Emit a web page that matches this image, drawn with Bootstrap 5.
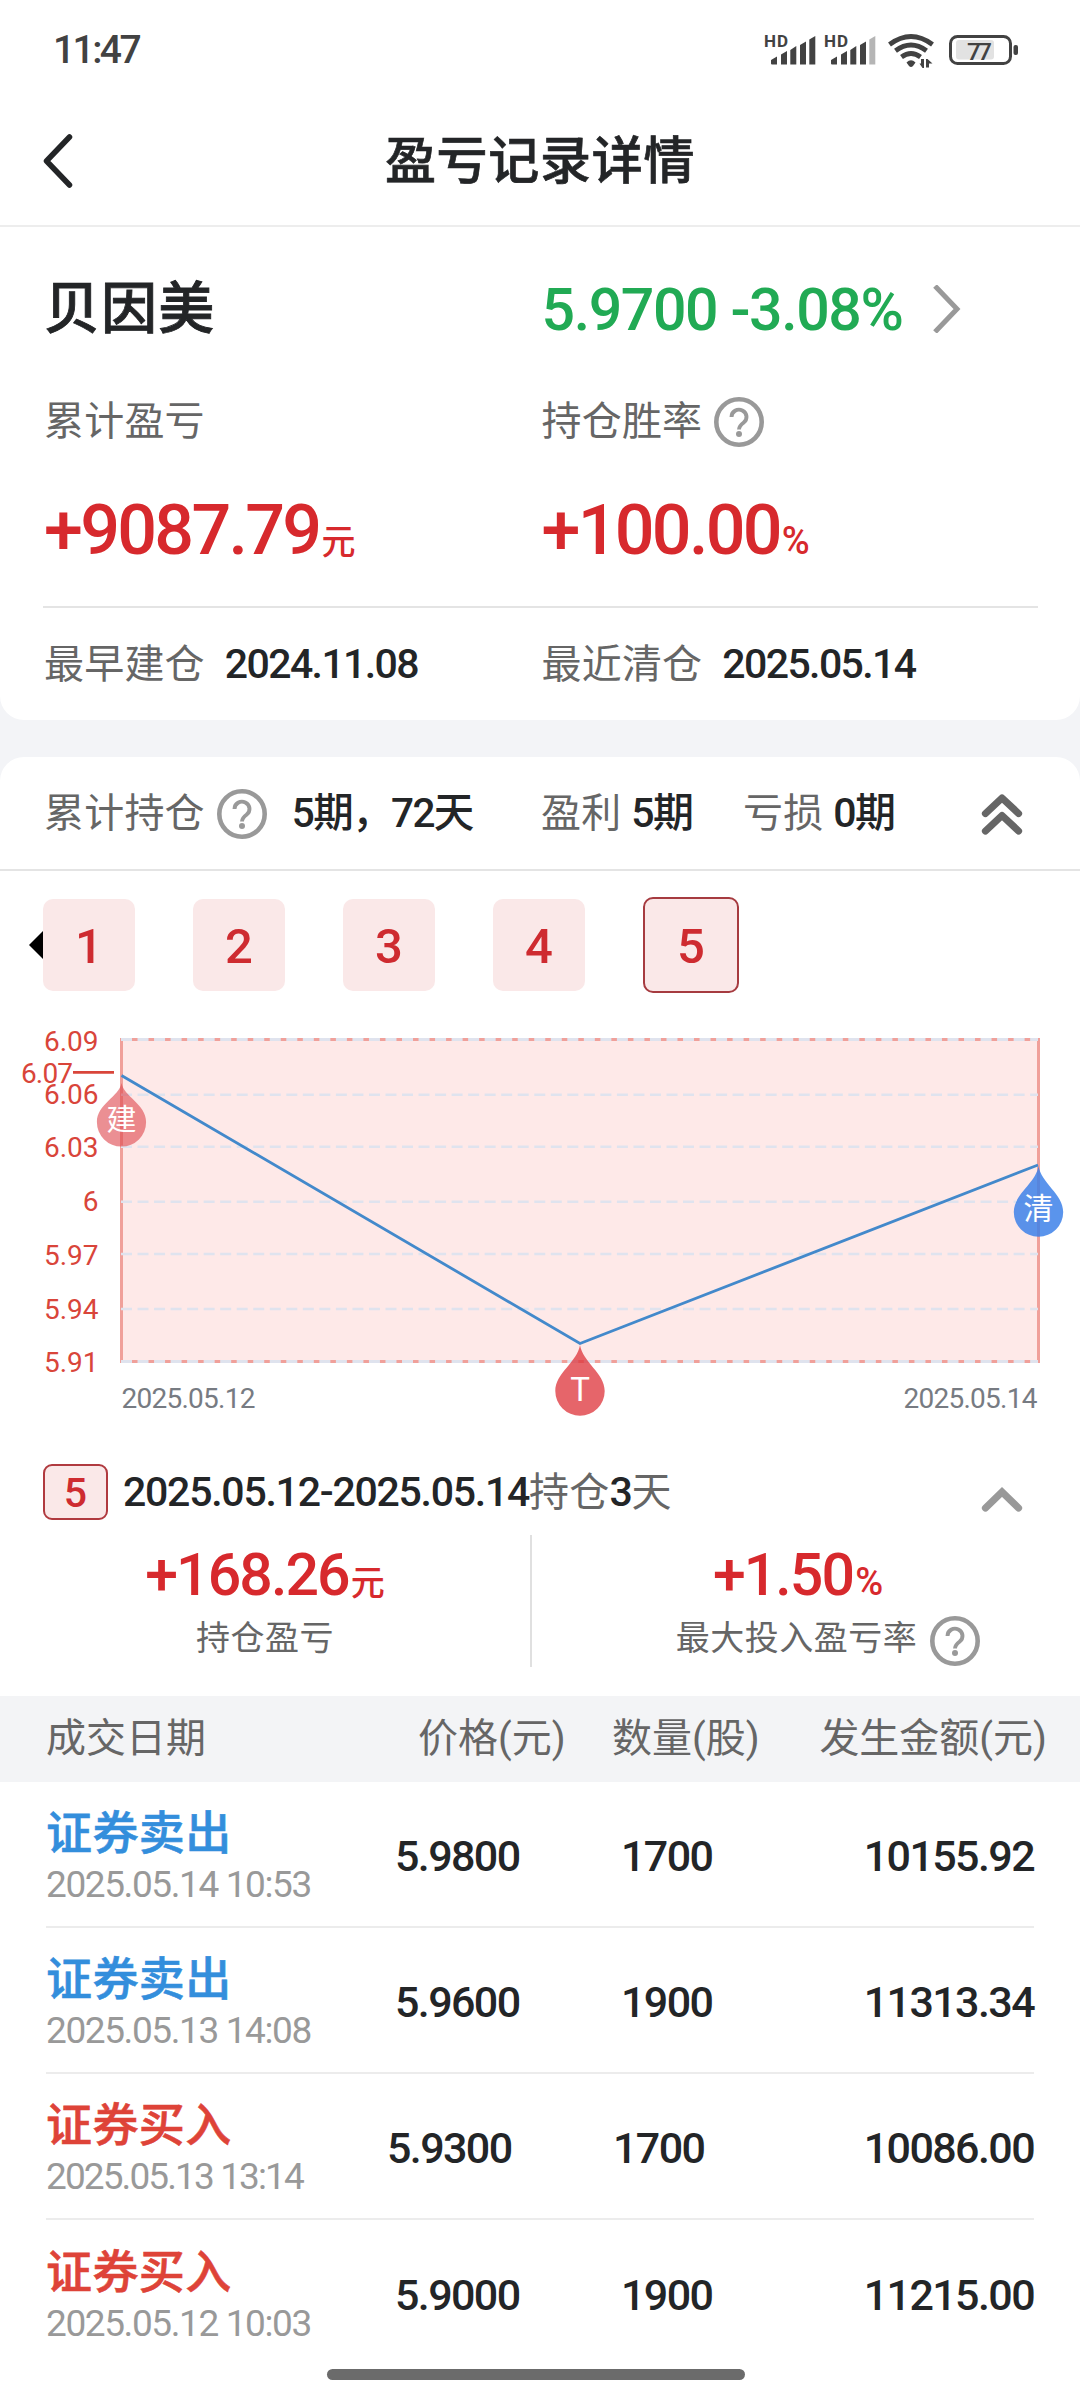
<!DOCTYPE html>
<html lang="zh-CN">
<head>
<meta charset="utf-8">
<meta name="viewport" content="width=device-width, initial-scale=1">
<title>盈亏记录详情</title>
<link href="https://cdn.jsdelivr.net/npm/bootstrap@5.3.0/dist/css/bootstrap.min.css" rel="stylesheet">
<style>
  body { font-family: Roboto, "Noto Sans CJK SC", sans-serif; background: #f3f4f7; color: #232527; width: 1080px; font-size: 40px; line-height: 1; }
  .screen { height: 2400px; overflow: hidden; }
  .screen svg { display: block; flex: none; }
  .line { white-space: nowrap; line-height: 1; }
  .gray { color: #666; letter-spacing: .2px; }
  .profit { color: #d7292d; }
  .fall { color: #21aa54; }
  .num { font-weight: 500; letter-spacing: -1.6px; font-size: 41px; }
  .statusbar { height: 100px; padding: 0 58px 0 53px; color: #424242; }
  .clock { font-size: 39px; letter-spacing: -2.6px; font-weight: 500; }
  .topbar { height: 127px; border-bottom: 2px solid #ededed; padding: 0 43px 2px; }
  .page-title { font-size: 51px; font-weight: 500; letter-spacing: .7px; -webkit-text-stroke: .7px currentColor; }
  .side { width: 80px; }
  .panel-a { border-radius: 0 0 24px 24px; height: 493px; padding: 0 42px 0 43px; }
  .panel-b { border-radius: 24px 24px 0 0; margin-top: 37px; height: 1643px; }
  .half { width: 498px; padding-left: 1px; }
  .stock { font-size: 56px; font-weight: 500; letter-spacing: 1.1px; -webkit-text-stroke: .8px currentColor; }
  .quote { font-size: 59px; font-weight: 500; letter-spacing: -1.4px; }
  .go { margin-left: 29px; }
  .big { font-size: 70px; font-weight: 500; letter-spacing: -2.7px; }
  .unit { font-size: 34px; letter-spacing: 0; font-weight: 500; margin-left: 2px; }
  .pct { font-size: 38px; letter-spacing: 0; font-weight: 500; margin-left: 2px; }
  .h-name { height: 161px; padding-top: 3px; } .h-label { height: 66px; padding-top: 2px; } .h-big { height: 152px; }
  .h-dates { height: 112px; border-top: 2px solid #e4e4e4; padding-top: 3px; }
  .gap-date { margin-left: 20px; }
  .help-a { margin-left: 12px; } .help-b { margin: 0 25px 0 12px; } .help-c { margin: 6px 0 0 13px; }
  .summary { height: 114px; border-bottom: 2px solid #e4e4e4; padding: 1px 57px 0 44px; }
  .sum-hold { width: 497px; } .sum-win { width: 202px; }
  .sum-hold .num { font-size: 40.5px; }
  .periods { height: 148px; padding: 0 43px 0 28px; }
  .arrow { border: 14px solid transparent; border-left: 0; border-right-color: #000; width: 15px; height: 28px; }
  .period { width: 92px; height: 92px; border-radius: 10px; background: #fae8e8; color: #ce2b30; font-size: 49px; font-weight: 500; margin-right: 58px; padding-top: 3px; }
  .period.current { width: 96px; height: 96px; border: 2px solid #a63b40; }
  .tag { width: 65px; height: 56px; border: 2px solid #b03a3f; border-radius: 9px; background: #fae8e8; color: #ce2b30; font-size: 41px; font-weight: 500; padding-top: 3px; }
  .detail { height: 88px; padding: 2px 57px 0 43px; }
  .span-text { margin-left: 15px; }
  .span-text .num { letter-spacing: -1.25px; }
  .fold { margin-top: 16px; }
  .result { height: 161px; }
  .result-l { width: 532px; height: 132px; border-right: 2px solid #e0e0e0; }
  .result-r { width: 548px; height: 132px; }
  .mid { font-size: 59px; font-weight: 500; letter-spacing: -1.9px; height: 78px; }
  .result-r .mid { padding-right: 16px; }
  .sub { font-size: 34px; letter-spacing: .5px; height: 50px; }
  .result-r .sub { padding-left: 44px; }
  .thead-row { height: 86px; background: #f3f4f6; padding: 0 33px 0 46px; letter-spacing: 0; }
  .h1st { width: 372px; } .h2nd { width: 194px; }
  .deal { height: 146px; margin: 0 46px; border-bottom: 2px solid #ececec; padding-top: 4px; }
  .deal:last-child { border: 0; }
  .c1 { width: 349px; }
  .narrow .c1 { width: 341px; }
  .narrow .stamp { letter-spacing: -1.9px; }
  .c2 { width: 226px; }
  .side-name { font-size: 46px; letter-spacing: .4px; font-weight: 500; margin-bottom: 10px; -webkit-text-stroke: .6px currentColor; }
  .sell { color: #338edc; } .buy { color: #de4338; }
  .stamp { font-size: 37px; letter-spacing: -1.4px; color: #999; }
  .val { font-size: 43px; font-weight: 500; letter-spacing: -1.6px; }
  .homebar { left: 327px; top: 2369px; width: 418px; height: 11px; border-radius: 6px; background: #6b6b6b; }
</style>
</head>
<body>
<svg width="0" height="0" class="position-absolute">
  <symbol id="help" viewBox="0 0 50 50">
    <circle cx="25" cy="25" r="22.7" fill="none" stroke="#999" stroke-width="4.6"/>
    <path d="M17.500 20a7.500 7.300 0 1 1 12 5.800c-2.800 2.100-4.500 3.400-4.500 6.700" fill="none" stroke="#999" stroke-width="3.900"/>
    <circle cx="25" cy="37" r="3" fill="#999"/>
  </symbol>
</svg>
<div class="screen position-relative">
  <div class="bg-white">
    <div class="statusbar d-flex align-items-center justify-content-between">
      <div class="line clock">11:47</div>
      <svg width="260" height="40" viewBox="762 30 260 40" fill="#424242">
        <g font-family="Roboto, sans-serif" font-weight="700" font-size="17">
          <text x="764" y="46.500" textLength="24">HD</text><text x="824" y="46.500" textLength="24">HD</text>
        </g>
        <path d="M771 60l6-3.500v8h-5q-1 0-1-1zM781 54.500l6-3.500v13.500h-6zM790.300 50l6-4v18.500h-6zM800 45l6-3.500v23h-6zM809.300 39.500l6-3.500v28.500h-6z"/>
        <path d="M831 60l6-3.500v8h-5q-1 0-1-1zM841 54.500l6-3.500v13.500h-6zM850.300 50l6-4v18.500h-6zM860 45l6-3.500v23h-6z"/>
        <path d="M869.300 39.500l6-3.500v28.500h-6z" fill="#b5b5b5"/>
        <g fill="none" stroke="#424242" stroke-width="4.800">
          <path d="M889.500 44.500q21.500-16 43 0"/><path d="M895.500 50.800q15.500-11.500 31 0"/><path d="M901.500 57q9.500-7 19 0"/>
        </g>
        <path d="M906.500 62.500q4.500-4.500 9 0l-2.500 3.500q-2 1.800-4 0z"/>
        <path d="M924 59v9h-1.500l-3-4.500h1.500V59zM926 59h1.500l5 4.500h-3.500v4h-3z"/>
        <rect x="950.500" y="36.500" width="60" height="27" rx="7" fill="none" stroke="#424242" stroke-width="3"/>
        <rect x="956" y="40" width="38" height="19.500" rx="3" fill="#e2e2e2"/>
        <rect x="1013.500" y="45" width="4.500" height="10" rx="2"/>
        <text x="967" y="59.500" font-family="Roboto, sans-serif" font-weight="500" font-size="24.500" textLength="25">77</text>
      </svg>
    </div>
    <div class="topbar d-flex align-items-center justify-content-between">
      <div class="side"><svg width="30" height="56" viewBox="0 0 30 56"><path d="M26.500 3L3.500 27l23 24" fill="none" stroke="#232527" stroke-width="5.500" stroke-linecap="round" stroke-linejoin="round"/></svg></div>
      <div class="line page-title">盈亏记录详情</div>
      <div class="side"></div>
    </div>
  </div>

  <section class="panel-a bg-white">
    <div class="d-flex align-items-center h-name">
      <div class="half line stock">贝因美</div>
      <div class="half d-flex align-items-center line quote fall">5.9700 -3.08%
        <svg width="32" height="48" viewBox="0 0 32 48" class="go"><path d="M3 1l22 23L3 47" fill="none" stroke="#999" stroke-width="5"/></svg>
      </div>
    </div>
    <div class="d-flex align-items-center h-label gray">
      <div class="half line">累计盈亏</div>
      <div class="half line d-flex align-items-center">持仓胜率<svg width="50" height="50" class="help-a"><use href="#help"/></svg></div>
    </div>
    <div class="d-flex align-items-center h-big profit">
      <div class="half line big">+9087.79<span class="unit">元</span></div>
      <div class="half line big">+100.00<span class="pct">%</span></div>
    </div>
    <div class="d-flex align-items-center h-dates">
      <div class="half line"><span class="gray">最早建仓</span><span class="num gap-date">2024.11.08</span></div>
      <div class="half line"><span class="gray">最近清仓</span><span class="num gap-date">2025.05.14</span></div>
    </div>
  </section>

  <section class="panel-b bg-white">
    <div class="summary d-flex align-items-center">
      <div class="line d-flex align-items-center sum-hold"><span class="gray">累计持仓</span><svg width="50" height="50" class="help-b"><use href="#help"/></svg><span class="num">5期，72天</span></div>
      <div class="line sum-win"><span class="gray">盈利</span> <span class="num">5期</span></div>
      <div class="line"><span class="gray">亏损</span> <span class="num">0期</span></div>
      <svg width="42" height="42" viewBox="0 0 42 42" class="ms-auto"><path d="M4.500 20.500L21 5l16.500 15.500M4.500 38L21 22.500 37.500 38" fill="none" stroke="#666" stroke-width="7.200" stroke-linecap="round" stroke-linejoin="round"/></svg>
    </div>
    <div class="periods d-flex align-items-center">
      <div class="arrow"></div>
      <div class="period d-flex align-items-center justify-content-center">1</div>
      <div class="period d-flex align-items-center justify-content-center">2</div>
      <div class="period d-flex align-items-center justify-content-center">3</div>
      <div class="period d-flex align-items-center justify-content-center">4</div>
      <div class="period current d-flex align-items-center justify-content-center">5</div>
    </div>
    <svg width="1080" height="428" viewBox="0 1019 1080 428" font-family="Roboto, 'Noto Sans CJK SC', sans-serif">
      <rect x="121" y="1038" width="918" height="324" fill="#fee9e8"/>
      <g stroke="#f0a09a" stroke-width="3"><path d="M121.500 1038V1363M1038.500 1038V1363M121 1039.500H1039M121 1361.500H1039"/></g>
      <g stroke="#dfe3ee" stroke-width="2.600" stroke-dasharray="11 5.530">
        <path stroke-width="3.200" d="M121 1039.500H1038M121 1361.500H1038"/>
        <path d="M121 1094.700H1038M121 1146.700H1038M121 1201.700H1038M121 1254H1038M121 1309H1038"/>
      </g>
      <path d="M121.500 1075.500L580 1343.500L1038 1165" fill="none" stroke="#4389cb" stroke-width="2.800"/>
      <g fill="#d9453a" font-size="28" text-anchor="end">
        <text x="98.500" y="1050.500">6.09</text><text x="73" y="1083" textLength="52">6.07</text><text x="98.500" y="1104">6.06</text>
        <text x="98.500" y="1157">6.03</text><text x="98.500" y="1211">6</text><text x="98.500" y="1265">5.97</text>
        <text x="98.500" y="1319">5.94</text><text x="98.500" y="1372">5.91</text>
      </g>
      <path d="M73 1072.300H114" stroke="#d9453a" stroke-width="2.800"/>
      <g fill="#777b82" font-size="28">
        <text x="121.500" y="1408" textLength="134">2025.05.12</text><text x="903.500" y="1408" textLength="134">2025.05.14</text>
      </g>
      <path d="M121.500 1083C124 1097 146.100 1104 146.100 1122A24.600 24.600 0 0 1 96.900 1122C96.900 1104 119 1097 121.500 1083Z" fill="#df4a50" fill-opacity=".62"/>
      <path d="M580 1345C582.500 1362 604.700 1373 604.700 1391A24.700 24.700 0 0 1 555.300 1391C555.300 1373 577.500 1362 580 1345Z" fill="#dd3138" fill-opacity=".75"/>
      <path d="M1038.500 1166C1041 1183 1063.200 1194 1063.200 1212A24.700 24.700 0 0 1 1013.800 1212C1013.800 1194 1036 1183 1038.500 1166Z" fill="#3a80e8" fill-opacity=".84"/>
      <g fill="#fff" font-size="30" text-anchor="middle">
        <text x="121.500" y="1130">建</text><text x="1038.500" y="1219">清</text><text x="580" y="1401" font-size="33">T</text>
      </g>
    </svg>
    <div class="detail d-flex align-items-center">
      <div class="tag d-flex align-items-center justify-content-center">5</div>
      <div class="line span-text"><span class="num">2025.05.12-2025.05.14</span><span class="gray">持仓</span><span class="num">3</span><span class="gray">天</span></div>
      <svg width="42" height="30" viewBox="0 0 42 30" class="ms-auto fold"><path d="M4.500 23L21 7l16.500 16" fill="none" stroke="#999" stroke-width="7.200" stroke-linecap="round"/></svg>
    </div>
    <div class="result d-flex">
      <div class="result-l">
        <div class="mid line profit d-flex align-items-center justify-content-center"><span>+168.26<span class="unit">元</span></span></div>
        <div class="line gray sub d-flex align-items-center justify-content-center">持仓盈亏</div>
      </div>
      <div class="result-r">
        <div class="mid line profit d-flex align-items-center justify-content-center"><span>+1.50<span class="pct">%</span></span></div>
        <div class="line gray sub d-flex align-items-center justify-content-center">最大投入盈亏率<svg width="50" height="50" class="help-c"><use href="#help"/></svg></div>
      </div>
    </div>
    <div class="thead-row d-flex align-items-center gray">
      <div class="line h1st">成交日期</div>
      <div class="line h2nd">价格(元)</div>
      <div class="line">数量(股)</div>
      <div class="line ms-auto">发生金额(元)</div>
    </div>
    <div>
      <div class="deal d-flex align-items-center"><div class="c1 line"><div class="side-name sell">证券卖出</div><div class="stamp">2025.05.14 10:53</div></div><div class="c2 val">5.9800</div><div class="val">1700</div><div class="val ms-auto">10155.92</div></div>
      <div class="deal d-flex align-items-center"><div class="c1 line"><div class="side-name sell">证券卖出</div><div class="stamp">2025.05.13 14:08</div></div><div class="c2 val">5.9600</div><div class="val">1900</div><div class="val ms-auto">11313.34</div></div>
      <div class="deal narrow d-flex align-items-center"><div class="c1 line"><div class="side-name buy">证券买入</div><div class="stamp">2025.05.13 13:14</div></div><div class="c2 val">5.9300</div><div class="val">1700</div><div class="val ms-auto">10086.00</div></div>
      <div class="deal d-flex align-items-center"><div class="c1 line"><div class="side-name buy">证券买入</div><div class="stamp">2025.05.12 10:03</div></div><div class="c2 val">5.9000</div><div class="val">1900</div><div class="val ms-auto">11215.00</div></div>
    </div>
  </section>
  <div class="homebar position-absolute"></div>
</div>
<script src="https://cdn.jsdelivr.net/npm/bootstrap@5.3.0/dist/js/bootstrap.bundle.min.js"></script>
</body>
</html>
